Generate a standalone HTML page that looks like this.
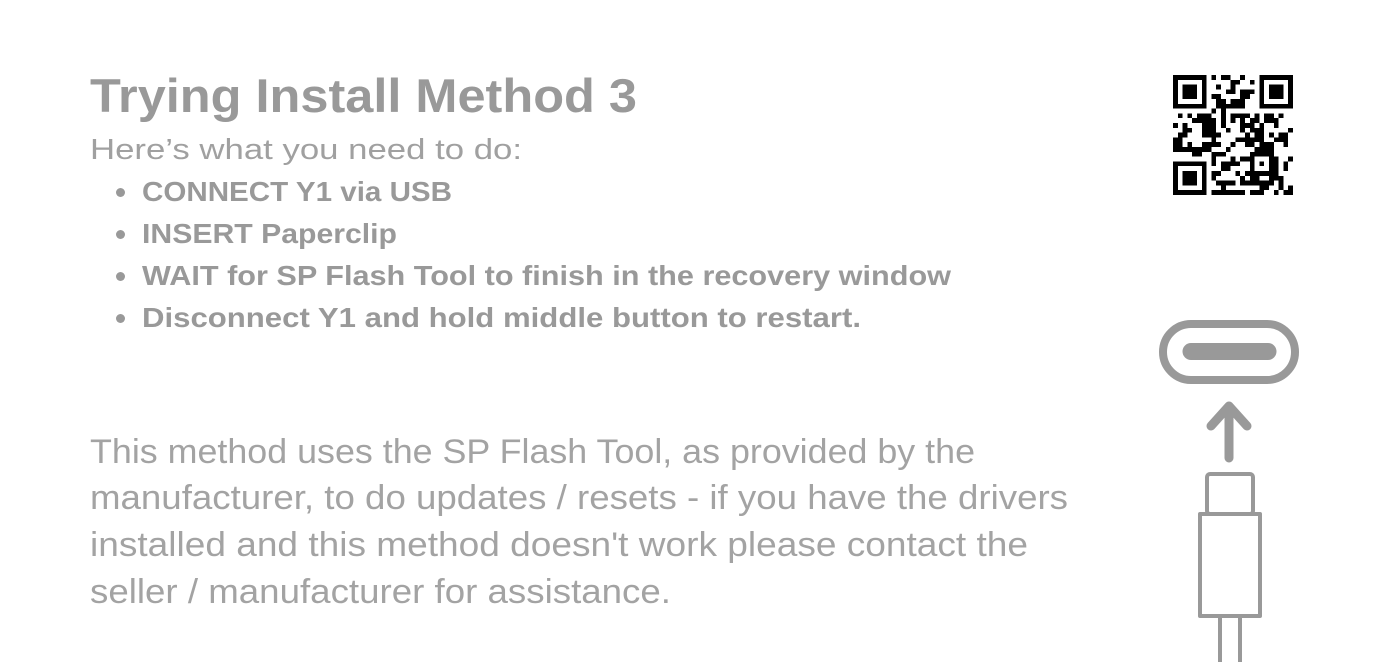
<!DOCTYPE html>
<html><head><meta charset="utf-8"><style>
html,body{margin:0;padding:0;background:#fff;width:1374px;height:662px;overflow:hidden;position:relative}
.t{position:absolute;white-space:nowrap;font-family:"Liberation Sans",sans-serif;transform-origin:0 50%;line-height:1}
.b{font-weight:bold}
.dot{position:absolute;width:9px;height:9px;border-radius:50%;background:#999}
</style></head><body>
<div class="t b" data-w="547" style="left:90px;top:72px;font-size:47px;color:#999">Trying Install Method 3</div>
<div class="t" data-w="432" style="left:90px;top:136px;font-size:29px;color:#a0a0a0">Here’s what you need to do:</div>
<div class="dot" style="left:116px;top:188px"></div>
<div class="dot" style="left:116px;top:230px"></div>
<div class="dot" style="left:116px;top:272px"></div>
<div class="dot" style="left:116px;top:314px"></div>
<div class="t b" data-w="310" style="left:142px;top:178px;font-size:28px;color:#999">CONNECT Y1 via USB</div>
<div class="t b" data-w="255" style="left:142px;top:220px;font-size:28px;color:#999">INSERT Paperclip</div>
<div class="t b" data-w="809" style="left:142px;top:262px;font-size:28px;color:#999">WAIT for SP Flash Tool to finish in the recovery window</div>
<div class="t b" data-w="719" style="left:142px;top:304px;font-size:28px;color:#999">Disconnect Y1 and hold middle button to restart.</div>
<div class="t" data-w="885" style="left:90px;top:435px;font-size:34px;color:#a3a3a3">This method uses the SP Flash Tool, as provided by the</div>
<div class="t" data-w="978" style="left:90px;top:481px;font-size:34px;color:#a3a3a3">manufacturer, to do updates / resets - if you have the drivers</div>
<div class="t" data-w="938" style="left:90px;top:528px;font-size:34px;color:#a3a3a3">installed and this method doesn't work please contact the</div>
<div class="t" data-w="581" style="left:90px;top:575px;font-size:34px;color:#a3a3a3">seller / manufacturer for assistance.</div>

<svg id="qr" style="position:absolute;left:1173px;top:75px" width="120" height="120" viewBox="0 0 25 25" shape-rendering="crispEdges"></svg>

<svg style="position:absolute;left:0;top:0" width="1374" height="662">
<g fill="none" stroke="#999" stroke-linecap="round" stroke-linejoin="round">
<rect x="1163" y="324" width="132" height="56" rx="28" stroke-width="8"/>
<line x1="1191" y1="351.5" x2="1268" y2="351.5" stroke-width="17"/>
<path d="M1229 458 V406 M1211 426 L1229 406 L1247 426" stroke-width="9"/>
<rect x="1207" y="474" width="46" height="40" rx="3" stroke-width="4"/>
<rect x="1200" y="514" width="60" height="102" stroke-width="4"/>
<path d="M1220 618 V662 M1240 618 V662" stroke-width="4" stroke-linecap="butt"/>
</g>
</svg>
<script>
document.querySelectorAll('.t[data-w]').forEach(e=>{var w=e.getBoundingClientRect().width;e.style.transform='scaleX('+(e.dataset.w/w)+')';});
var s=document.getElementById('qr'),h='',seed=7;
function r(){seed=(seed*16807)%2147483647;return seed/2147483647;}
function finder(x,y){return '<rect x="'+x+'" y="'+y+'" width="7" height="7"/><rect x="'+(x+1)+'" y="'+(y+1)+'" width="5" height="5" fill="#fff"/><rect x="'+(x+2)+'" y="'+(y+2)+'" width="3" height="3"/>';}
for(var y=0;y<25;y++)for(var x=0;x<25;x++){
 if((x<8&&y<8)||(x>16&&y<8)||(x<8&&y>16))continue;
 if(r()<0.5)h+='<rect x="'+x+'" y="'+y+'" width="1" height="1"/>';
}
h+=finder(0,0)+finder(18,0)+finder(0,18)+'<rect x="16" y="16" width="5" height="5"/><rect x="17" y="17" width="3" height="3" fill="#fff"/><rect x="18" y="18" width="1" height="1"/>';
s.innerHTML=h;
</script>
</body></html>
